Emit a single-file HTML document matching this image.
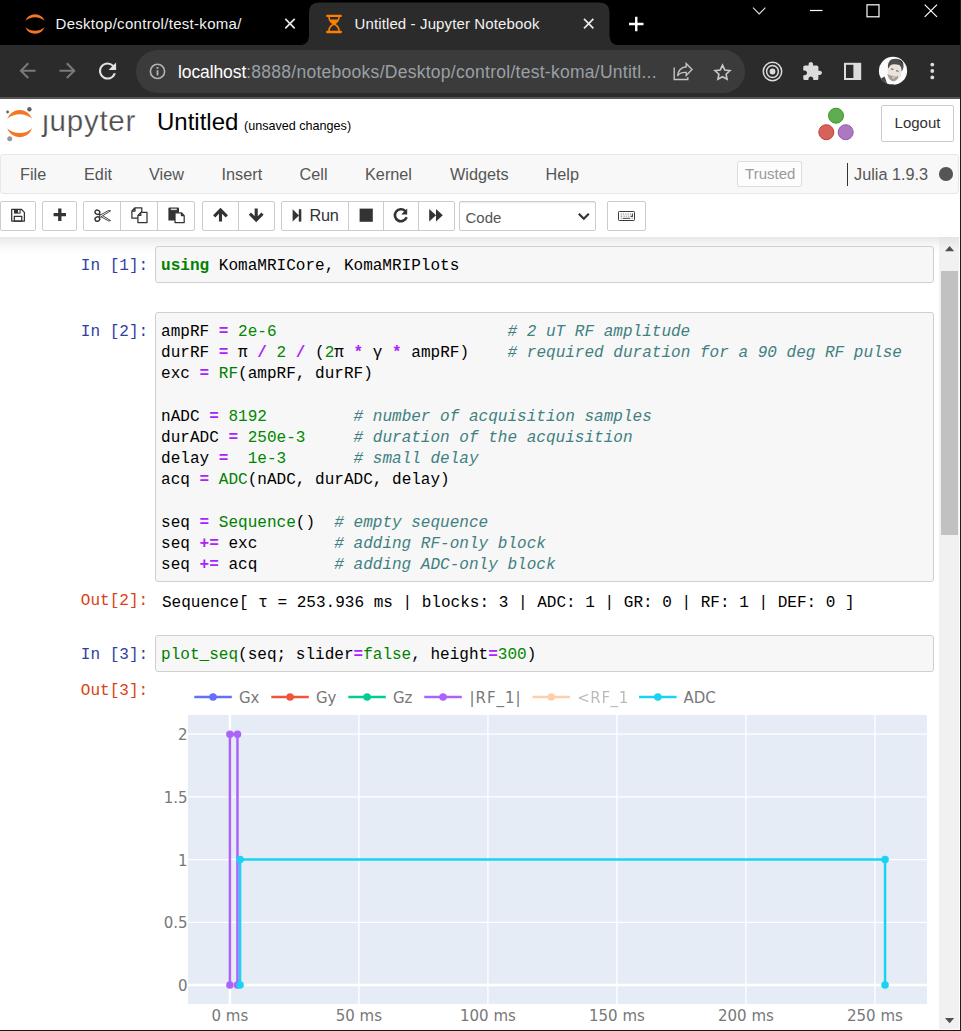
<!DOCTYPE html>
<html lang="en">
<head>
<meta charset="utf-8">
<title>Untitled - Jupyter Notebook</title>
<style>
*{box-sizing:border-box;margin:0;padding:0}
html,body{width:961px;height:1031px;overflow:hidden;background:#fff}
body{position:relative;font-family:"Liberation Sans",Arial,sans-serif;color:#333}
.abs{position:absolute}
svg{position:absolute;overflow:visible}
/* ---------- browser chrome ---------- */
#tabbar{left:0;top:0;width:961px;height:46px;background:#000}
#toolbar{left:0;top:45px;width:961px;height:52px;background:#2b2b2b}
#tbline{left:0;top:97px;width:961px;height:2px;background:#555}
.tabtxt{color:#f1f1f1;font-size:15px;line-height:20px;white-space:nowrap;top:14px}
#pill{left:135.5px;top:50px;width:609.5px;height:43px;border-radius:21.5px;background:#3b3b3b}
#url{left:178px;top:61px;letter-spacing:0.27px;font-size:17.5px;line-height:22px;color:#9aa0a6;white-space:nowrap}
#url b{font-weight:normal;color:#fff;letter-spacing:-0.1px}
/* ---------- jupyter header ---------- */
#jtitle{left:157px;top:107px;font-size:24px;line-height:30px;color:#000;white-space:nowrap}
#junsaved{left:244px;top:117px;font-size:12.6px;line-height:18px;color:#000;white-space:nowrap}
#jlogo{left:42.3px;top:100.5px;font-size:29.5px;line-height:40px;color:#4e4e4e;letter-spacing:0.75px;white-space:nowrap;-webkit-text-stroke:0.25px #fff}
#logout{left:881px;top:105px;width:73px;height:37px;border:1px solid #ccc;border-radius:2px;background:#fff;color:#333;font-size:15px;line-height:34px;text-align:center}
#menubar{left:0;top:154px;width:959px;height:40px;background:#f8f8f8;border:1px solid #e7e7e7;border-radius:3px}
.mi{top:164px;font-size:16.25px;line-height:20px;color:#555;white-space:nowrap}
#trusted{left:737px;top:160.5px;width:65px;height:26px;border:1px solid #ddd;border-radius:2px;background:#fdfdfd;color:#999;font-size:15px;line-height:24.4px;text-align:center;text-indent:1.5px}
#kname{left:854px;top:164px;font-size:16.25px;line-height:20px;color:#555;white-space:nowrap}
#ksep{left:846.8px;top:163px;width:1px;height:23px;background:#333}
#kdot{left:939px;top:167.2px;width:13.6px;height:13.6px;border-radius:50%;background:#555}
.btn{top:201px;height:30px;border:1px solid #ccc;background:#fff;border-radius:2px}
.bdiv{top:202px;width:1px;height:28px;background:#ccc}
#hshadow{left:0;top:237px;width:939px;height:17px;background:linear-gradient(#e8e8e8 0,#efefef 22%,#f6f6f6 45%,#fbfbfb 70%,#fff 100%)}
#sshadow{left:939px;top:237px;width:20px;height:12px;background:linear-gradient(rgba(0,0,0,.055),rgba(0,0,0,0))}
/* ---------- notebook ---------- */
.mono{font-family:"Liberation Mono","DejaVu Sans Mono",monospace;font-size:16.04px;line-height:21.2px;white-space:pre}
.prompt{left:0;width:152px;text-align:right}
.pin{color:#303f9f}
.pout{color:#d84315}
.inbox{left:155px;width:779px;background:#f7f7f7;border:1px solid #cfcfcf;border-radius:3px}
.code{left:161.1px;color:#000}
.k{color:#008000;font-weight:bold}
.o{color:#aa22ff;font-weight:bold}
.n{color:#008800}
.b{color:#008000}
.c{color:#408080;font-style:italic}
/* ---------- scrollbar / frame ---------- */
#sbar{left:939px;top:237px;width:20px;height:792px;background:#f1f1f1}
#sthumb{left:941px;top:271px;width:17px;height:264px;background:#c1c1c1}
#rborder{left:960px;top:0;width:1px;height:1031px;background:#1e1e20}
#bborder{left:0;top:1030px;width:961px;height:1px;background:#22150c}
#bborder2{left:0;top:1029px;width:961px;height:1px;background:#8a8a8a}
/* plot */
.pl{font-family:"DejaVu Sans",Verdana,sans-serif;font-size:15px;fill:#787878}
</style>
</head>
<body>
<!-- ================= BROWSER CHROME ================= -->
<div id="tabbar" class="abs"></div>
<div id="toolbar" class="abs"></div>
<div id="tbline" class="abs"></div>
<svg style="left:0;top:0" width="961" height="100" viewBox="0 0 961 100">
  <!-- active tab -->
  <path d="M298 45.5 Q309 45.5 309 35 L309 12.5 Q309 2.5 319 2.5 L599.5 2.5 Q609.5 2.5 609.5 12.5 L609.5 35 Q609.5 45.5 620.5 45.5 Z" fill="#2b2b2b"/>
  <!-- tab1 favicon (jupyter) -->
  <path d="M25.4 20.7 A10.34 10.34 0 0 1 44.6 20.7 A14.9 14.9 0 0 0 25.4 20.7 Z" fill="#f37726"/>
  <path d="M25.4 27.2 A10.34 10.34 0 0 0 44.6 27.2 A14.9 14.9 0 0 1 25.4 27.2 Z" fill="#f37726"/>
  <!-- tab1 close -->
  <path d="M285.3 18.9 L294.7 28.3 M294.7 18.9 L285.3 28.3" stroke="#e8e8e8" stroke-width="1.7" fill="none"/>
  <!-- tab2 favicon (hourglass) -->
  <g fill="#ff8000" stroke="none">
    <rect x="326.2" y="14.7" width="15.6" height="2.4" rx="0.8"/>
    <rect x="326.2" y="30.8" width="15.6" height="2.4" rx="0.8"/>
    <path d="M329.3 19.6 L338.7 19.6 Q338.2 22 334 24.4 Q329.8 22 329.3 19.6 Z"/>
  </g>
  <path d="M329 17 Q328.8 21.5 334 24 Q339.2 21.5 339 17 M329 31 Q328.8 26.5 334 24 Q339.2 26.5 339 31" stroke="#ff8000" stroke-width="1.5" fill="none"/>
  <!-- tab2 close -->
  <path d="M584 18.9 L593.4 28.3 M593.4 18.9 L584 28.3" stroke="#e8e8e8" stroke-width="1.7" fill="none"/>
  <!-- new tab plus -->
  <path d="M629 24 L643.5 24 M636.25 16.7 L636.25 31.3" stroke="#fff" stroke-width="2.4" fill="none"/>
  <!-- window controls -->
  <path d="M753 7.7 L759.2 13.9 L765.4 7.7" stroke="#e0e0e0" stroke-width="1.1" fill="none"/>
  <path d="M810 10.5 L822.5 10.5" stroke="#fff" stroke-width="1.2" fill="none"/>
  <rect x="867" y="4.8" width="12" height="12" stroke="#fff" stroke-width="1.2" fill="none"/>
  <path d="M924.7 4.6 L937 16.9 M937 4.6 L924.7 16.9" stroke="#fff" stroke-width="1.2" fill="none"/>
</svg>
<div class="abs tabtxt" style="left:55.5px;letter-spacing:0.3px">Desktop/control/test-koma/</div>
<div class="abs tabtxt" style="left:354.5px;letter-spacing:0.12px">Untitled - Jupyter Notebook</div>
<div id="pill" class="abs"></div>
<div id="url" class="abs"><b>localhost</b>:8888/notebooks/Desktop/control/test-koma/Untitl...</div>
<svg style="left:0;top:45px" width="961" height="52" viewBox="0 45 961 52">
  <!-- back / forward -->
  <g transform="translate(15.4,58.5) scale(1.0125)" fill="#7a7a7a"><path d="M20 11H7.83l5.59-5.59L12 4l-8 8 8 8 1.41-1.41L7.83 13H20v-2z"/></g>
  <g transform="translate(79.7,58.5) scale(-1.0125,1.0125)" fill="#7a7a7a"><path d="M20 11H7.83l5.59-5.59L12 4l-8 8 8 8 1.41-1.41L7.83 13H20v-2z"/></g>
  <!-- reload -->
  <g transform="translate(94.7,58.2) scale(1.07)" fill="#e2e2e2"><path d="M17.65 6.35A7.958 7.958 0 0 0 12 4c-4.42 0-7.99 3.58-7.99 8s3.57 8 7.99 8c3.73 0 6.84-2.55 7.73-6h-2.08A5.99 5.99 0 0 1 12 18c-3.31 0-6-2.69-6-6s2.69-6 6-6c1.66 0 3.14.69 4.22 1.78L13 11h7V4l-2.35 2.35z"/></g>
  <!-- info -->
  <circle cx="157.5" cy="71.4" r="7.1" fill="none" stroke="#b4b4b4" stroke-width="1.6"/>
  <rect x="156.6" y="70.2" width="1.8" height="5.2" fill="#b4b4b4"/>
  <rect x="156.6" y="67" width="1.8" height="1.9" fill="#b4b4b4"/>
  <!-- share -->
  <g fill="none" stroke="#c4c4c4" stroke-width="1.4" stroke-linejoin="miter">
    <path d="M674.2 67.4 L674.2 79.5 L687.8 79.5 L687.8 77.2"/>
    <path d="M686.2 63.6 L692 69.6 L686.2 75.6 L686.2 72.4 Q680 72 677.6 76 Q678.4 67.6 686.2 66.8 Z"/>
  </g>
  <!-- star -->
  <path d="M722.5 64.6 L725 69.9 L730.8 70.6 L726.5 74.6 L727.6 80.3 L722.5 77.5 L717.4 80.3 L718.5 74.6 L714.2 70.6 L720 69.9 Z" transform="translate(722.5,72.2) scale(0.9) translate(-722.5,-72.4)" fill="none" stroke="#c8c8c8" stroke-width="1.8" stroke-linejoin="miter"/>
  <!-- target extension -->
  <g fill="none" stroke="#dcdcdc" stroke-width="1.5">
    <circle cx="772.5" cy="71.5" r="9.2"/>
    <circle cx="772.5" cy="71.5" r="5.9"/>
  </g>
  <circle cx="772.5" cy="71.5" r="2.9" fill="#dcdcdc"/>
  <!-- puzzle -->
  <g transform="translate(801.5,61.2) scale(0.89,0.86)" fill="#dcdcdc"><path d="M20.5 11H19V7c0-1.1-.9-2-2-2h-4V3.5C13 2.12 11.88 1 10.500 1S8 2.120 8 3.500V5H4c-1.100 0-1.990.900-1.990 2v3.800H3.500c1.490 0 2.700 1.210 2.700 2.700s-1.210 2.700-2.700 2.700H2V20c0 1.100.900 2 2 2h3.800v-1.500c0-1.490 1.210-2.700 2.700-2.700s2.700 1.210 2.700 2.700V22H17c1.100 0 2-.900 2-2v-4h1.500c1.380 0 2.500-1.120 2.500-2.500S21.880 11 20.500 11z"/></g>
  <!-- side panel -->
  <rect x="845" y="63.8" width="15.2" height="15.2" fill="none" stroke="#dcdcdc" stroke-width="2"/>
  <rect x="853.4" y="63.8" width="6.8" height="15.2" fill="#dcdcdc"/>
  <!-- avatar -->
  <defs><clipPath id="avc"><circle cx="893" cy="70.9" r="14.1"/></clipPath><filter id="avb" x="-10%" y="-10%" width="120%" height="120%"><feGaussianBlur stdDeviation="0.55"/></filter></defs>
  <circle cx="893" cy="70.9" r="14.1" fill="#fbfbfb"/>
  <g clip-path="url(#avc)"><g filter="url(#avb)">
    <path d="M881 78.5 L884.6 76.6 L887.4 84.5 L883 86 Z" fill="#454545"/>
    <path d="M889.4 84.2 L894 84.2 L893.6 86.5 L889.6 86.5 Z" fill="#2a3040"/>
    <ellipse cx="894.4" cy="71.6" rx="6.7" ry="8.8" fill="#e9e2db" transform="rotate(-16 894.4 71.6)"/>
    <path d="M887.9 67.6 Q887.6 62 891.2 59.6 Q896 57.6 900.6 60 Q904.2 62.4 903.4 67.4 Q902.8 70.4 901.6 71.6 Q901.8 67.2 899.6 65.2 Q895.6 63.6 892 64.4 Q889.6 65.2 888.6 68.2 Z" fill="#514b47"/>
    <path d="M898.6 59.4 Q902.2 60.4 903 64 Q901 61.8 898.6 59.4 Z" fill="#1a1817"/>
    <path d="M887.4 73.4 Q887.8 78.4 891.8 81 Q894.6 82 896.4 80 Q898.6 77.6 898.2 75.4 Q895.4 77.8 892.6 75.6 Q890 76.6 887.4 73.4 Z" fill="#91877f" opacity="0.8"/>
    <ellipse cx="893.4" cy="77.6" rx="1.7" ry="1.1" fill="#d9d1c9" opacity="0.9"/>
    <ellipse cx="892.2" cy="69.1" rx="1.5" ry="0.6" fill="#5b544f" transform="rotate(14 892.2 69.1)"/>
    <ellipse cx="897.4" cy="71" rx="1.5" ry="0.6" fill="#5b544f" transform="rotate(14 897.4 71)"/>
  </g></g>
  <!-- menu dots -->
  <circle cx="932.3" cy="64.6" r="1.9" fill="#dcdcdc"/><circle cx="932.3" cy="71" r="1.9" fill="#dcdcdc"/><circle cx="932.3" cy="77.4" r="1.9" fill="#dcdcdc"/>
</svg>

<!-- ================= JUPYTER HEADER ================= -->
<svg style="left:0;top:99px" width="160" height="56" viewBox="0 99 160 56">
  <path d="M7.2 118.8 A13.28 13.28 0 0 1 32.2 118.8 A19.28 19.28 0 0 0 7.2 118.8 Z" fill="#f37726"/>
  <path d="M7.2 128.2 A13.18 13.18 0 0 0 32.2 128.2 A18.39 18.39 0 0 1 7.2 128.2 Z" fill="#f37726"/>
  <circle cx="29.4" cy="109.3" r="2.2" fill="#616262"/>
  <circle cx="7.6" cy="112" r="1.4" fill="#616262"/>
  <circle cx="9.7" cy="138.8" r="2.5" fill="#989798"/>
</svg>
<div id="jlogo" class="abs">&#567;upyter</div>
<div id="jtitle" class="abs">Untitled</div>
<div id="junsaved" class="abs">(unsaved changes)</div>
<svg style="left:810px;top:100px" width="60" height="50" viewBox="810 100 60 50">
  <circle cx="836" cy="115.7" r="7.5" fill="#60ad51" stroke="#389826" stroke-width="1"/>
  <circle cx="826.3" cy="132.2" r="7.5" fill="#d5635c" stroke="#cb3c33" stroke-width="1"/>
  <circle cx="845.7" cy="132.2" r="7.5" fill="#aa79c1" stroke="#9558b2" stroke-width="1"/>
</svg>
<div id="logout" class="abs">Logout</div>
<div id="menubar" class="abs"></div>
<div class="abs mi" style="left:20px">File</div>
<div class="abs mi" style="left:84px">Edit</div>
<div class="abs mi" style="left:149px">View</div>
<div class="abs mi" style="left:221.5px">Insert</div>
<div class="abs mi" style="left:299.5px">Cell</div>
<div class="abs mi" style="left:365px">Kernel</div>
<div class="abs mi" style="left:450px">Widgets</div>
<div class="abs mi" style="left:545.5px">Help</div>
<div id="trusted" class="abs">Trusted</div>
<div id="ksep" class="abs"></div>
<div id="kname" class="abs">Julia 1.9.3</div>
<div id="kdot" class="abs"></div>
<!-- toolbar buttons -->
<div class="abs btn" style="left:0px;width:36px"></div>
<div class="abs btn" style="left:42px;width:35px"></div>
<div class="abs btn" style="left:83px;width:112px"></div>
<div class="abs bdiv" style="left:120px"></div><div class="abs bdiv" style="left:157px"></div>
<div class="abs btn" style="left:202px;width:73px"></div>
<div class="abs bdiv" style="left:238px"></div>
<div class="abs btn" style="left:281px;width:174px"></div>
<div class="abs bdiv" style="left:348px"></div><div class="abs bdiv" style="left:383px"></div><div class="abs bdiv" style="left:418px"></div>
<div class="abs btn" style="left:459px;width:137px;border-color:#ccc;box-shadow:inset 0 1px 1px rgba(0,0,0,.075)"></div>
<div class="abs btn" style="left:607px;width:39px"></div>
<div class="abs" id="runtxt" style="left:309.5px;top:205px;font-size:16.25px;letter-spacing:-0.3px;line-height:20px;color:#333">Run</div>
<div class="abs" id="codetxt" style="left:465.5px;top:207.5px;font-size:15px;line-height:20px;color:#555">Code</div>
<svg style="left:0;top:198px" width="660" height="36" viewBox="0 198 660 36">
  <!-- save (floppy) -->
  <g stroke="#333" stroke-width="1.25" fill="none" stroke-linejoin="round">
    <path d="M11.7 209.3 H21.3 L24.4 212.4 V221.1 H11.7 Z"/>
    <rect x="14.3" y="216.4" width="7.5" height="4.7"/>
  </g>
  <path d="M14 209.3 H20.6 V213.6 H14 Z" fill="#333"/>
  <rect x="18" y="210" width="1.5" height="2.6" fill="#fff"/>
  <!-- plus -->
  <path d="M53.6 214.7 H66 M59.8 208.5 V220.9" stroke="#333" stroke-width="3.3" fill="none"/>
  <!-- scissors -->
  <g stroke="#333" fill="none">
    <ellipse cx="97.4" cy="212.3" rx="2.4" ry="2.1" stroke-width="1.4" transform="rotate(25 97.4 212.3)"/>
    <ellipse cx="97.4" cy="219.1" rx="2.4" ry="2.1" stroke-width="1.4" transform="rotate(-25 97.4 219.1)"/>
    <path d="M99.4 213.6 L110.6 220.6 L108.6 220.9 L99.6 216 Z" stroke-width="0.9" fill="#fff"/>
    <path d="M99.4 217.8 L110.6 210.8 L108.6 210.5 L99.6 215.4 Z" stroke-width="0.9" fill="#fff"/>
  </g>
  <!-- copy -->
  <g stroke="#333" stroke-width="1.25" fill="#fff" stroke-linejoin="round">
    <path d="M135 207.8 H141.8 V218.2 H131.9 V211 Z M135 207.8 V211 H131.9"/>
    <path d="M140.8 212.4 H147 V222.5 H137.9 V215.4 Z M140.8 212.4 V215.4 H137.9"/>
  </g>
  <!-- paste -->
  <path d="M168.4 208.6 Q168.4 207.4 169.6 207.4 H177.8 Q179 207.4 179 208.6 V220.4 H168.4 Z" fill="#333"/>
  <rect x="170.8" y="208.6" width="6" height="1.5" fill="#ddd"/>
  <path d="M175 212.8 H181.4 L184.2 215.6 V222.5 H175 Z M181.4 212.8 V215.6 H184.2" stroke="#333" stroke-width="1.25" fill="#fff" stroke-linejoin="round"/>
  <!-- arrow up / down -->
  <path d="M220.5 221.4 V210.6 M214.2 216.3 L220.5 210 L226.8 216.3" stroke="#333" stroke-width="3.1" fill="none" stroke-linejoin="miter"/>
  <path d="M256.2 208.6 V219.4 M249.9 213.7 L256.2 220 L262.5 213.7" stroke="#333" stroke-width="3.1" fill="none" stroke-linejoin="miter"/>
  <!-- run (step-forward) -->
  <path d="M292.6 209.2 L299 215.4 L292.6 221.6 Z" fill="#333"/>
  <rect x="298.8" y="209.2" width="2.5" height="12.4" fill="#333"/>
  <!-- stop -->
  <rect x="359.6" y="208.6" width="13.2" height="13.2" fill="#333"/>
  <!-- repeat -->
  <path d="M405.3 211.1 A6 6 0 1 0 406.6 217.2" stroke="#333" stroke-width="2.6" fill="none"/>
  <path d="M407.2 208.4 V214.4 H401.2 Z" fill="#333"/>
  <!-- forward -->
  <path d="M429.2 209 L436 215.3 L429.2 221.6 Z M436 209 L442.8 215.3 L436 221.6 Z" fill="#333"/>
  <!-- select chevron -->
  <path d="M578.8 213.8 L583.8 218.8 L588.8 213.8" stroke="#333" stroke-width="2.2" fill="none"/>
  <!-- keyboard -->
  <rect x="618.5" y="211.5" width="16" height="9" rx="0.8" fill="#fff" stroke="#3a3a3a" stroke-width="1"/>
  <g fill="#8a8a8a">
    <rect x="620.6" y="213.5" width="1.2" height="1.1"/><rect x="622.9" y="213.5" width="1.2" height="1.1"/><rect x="625.2" y="213.5" width="1.2" height="1.1"/><rect x="627.5" y="213.5" width="1.2" height="1.1"/><rect x="629.8" y="213.5" width="1.2" height="1.1"/>
    <rect x="620.6" y="215.6" width="1.8" height="1.1"/><rect x="623.6" y="215.6" width="1.2" height="1.1"/><rect x="625.9" y="215.6" width="1.2" height="1.1"/><rect x="628.2" y="215.6" width="1.2" height="1.1"/>
    <rect x="620.6" y="217.8" width="1.2" height="1.1"/><rect x="631.6" y="217.8" width="1.2" height="1.1"/>
  </g>
  <path d="M632.4 213.4 V216.4 H630.6" stroke="#444" stroke-width="1.1" fill="none"/>
  <rect x="622.8" y="217.8" width="7.4" height="1.1" fill="#555"/>
</svg>
<div id="hshadow" class="abs"></div>

<!-- ================= NOTEBOOK ================= -->
<div class="abs inbox" style="top:246px;height:37px"></div>
<div class="abs mono pin" style="left:80.8px;top:255.9px">In [1]:</div>
<div class="abs mono code" style="top:255.9px"><span class="k">using</span> KomaMRICore, KomaMRIPlots</div>
<div class="abs inbox" style="top:312px;height:270px"></div>
<div class="abs mono pin" style="left:80.8px;top:321.9px">In [2]:</div>
<div class="abs mono code" style="top:321.9px">ampRF <span class="o">=</span> <span class="n">2e-6</span>                        <span class="c"># 2 uT RF amplitude</span>
durRF <span class="o">=</span> π <span class="o">/</span> <span class="n">2</span> <span class="o">/</span> (<span class="n">2</span>π <span class="o">*</span> γ <span class="o">*</span> ampRF)    <span class="c"># required duration for a 90 deg RF pulse</span>
exc <span class="o">=</span> <span class="b">RF</span>(ampRF, durRF)

nADC <span class="o">=</span> <span class="n">8192</span>         <span class="c"># number of acquisition samples</span>
durADC <span class="o">=</span> <span class="n">250e-3</span>     <span class="c"># duration of the acquisition</span>
delay <span class="o">=</span>  <span class="n">1e-3</span>       <span class="c"># small delay</span>
acq <span class="o">=</span> <span class="b">ADC</span>(nADC, durADC, delay)

seq <span class="o">=</span> <span class="b">Sequence</span>()  <span class="c"># empty sequence</span>
seq <span class="o">+=</span> exc        <span class="c"># adding RF-only block</span>
seq <span class="o">+=</span> acq        <span class="c"># adding ADC-only block</span></div>
<div class="abs mono pout" style="left:80.8px;top:590.9px">Out[2]:</div>
<div class="abs mono code" style="left:162px;top:592.9px">Sequence[ τ = 253.936 ms | blocks: 3 | ADC: 1 | GR: 0 | RF: 1 | DEF: 0 ]</div>
<div class="abs inbox" style="top:635px;height:37px"></div>
<div class="abs mono pin" style="left:80.8px;top:644.9px">In [3]:</div>
<div class="abs mono code" style="top:644.9px"><span class="b">plot_seq</span>(seq; slider<span class="o">=</span><span class="b">false</span>, height<span class="o">=</span><span class="n">300</span>)</div>
<div class="abs mono pout" style="left:80.8px;top:680.9px">Out[3]:</div>

<!-- ================= PLOT ================= -->
<svg style="left:0;top:680px" width="939" height="350" viewBox="0 680 939 350">
<rect x="188" y="715" width="739" height="289" fill="#e5ecf6"/>
<line x1="358.9" x2="358.9" y1="715" y2="1004" stroke="#fff" stroke-width="1.3"/>
<line x1="487.9" x2="487.9" y1="715" y2="1004" stroke="#fff" stroke-width="1.3"/>
<line x1="616.9" x2="616.9" y1="715" y2="1004" stroke="#fff" stroke-width="1.3"/>
<line x1="745.9" x2="745.9" y1="715" y2="1004" stroke="#fff" stroke-width="1.3"/>
<line x1="874.9" x2="874.9" y1="715" y2="1004" stroke="#fff" stroke-width="1.3"/>
<line x1="188" x2="927" y1="922.3" y2="922.3" stroke="#fff" stroke-width="1.3"/>
<line x1="188" x2="927" y1="859.6" y2="859.6" stroke="#fff" stroke-width="1.3"/>
<line x1="188" x2="927" y1="796.9" y2="796.9" stroke="#fff" stroke-width="1.3"/>
<line x1="188" x2="927" y1="734.2" y2="734.2" stroke="#fff" stroke-width="1.3"/>
<line x1="229.9" x2="229.9" y1="715" y2="1004" stroke="#fff" stroke-width="2.5"/>
<line x1="188" x2="927" y1="985.0" y2="985.0" stroke="#fff" stroke-width="2.5"/>
<polyline fill="none" stroke="#ab63fa" stroke-width="2.5" points="229.9,985.0 229.9,734.2 237.47,734.2 237.47,985.0"/>
<circle cx="229.9" cy="985.0" r="3.75" fill="#ab63fa"/>
<circle cx="229.9" cy="734.2" r="3.75" fill="#ab63fa"/>
<circle cx="237.47" cy="734.2" r="3.75" fill="#ab63fa"/>
<circle cx="237.47" cy="985.0" r="3.75" fill="#ab63fa"/>
<polyline fill="none" stroke="#19d3f3" stroke-width="2.5" points="240.05,985.0 240.05,859.6 885.05,859.6 885.05,985.0"/>
<circle cx="240.05" cy="985.0" r="3.75" fill="#19d3f3"/>
<circle cx="240.05" cy="859.6" r="3.75" fill="#19d3f3"/>
<circle cx="885.05" cy="859.6" r="3.75" fill="#19d3f3"/>
<circle cx="885.05" cy="985.0" r="3.75" fill="#19d3f3"/>
<text class="pl" x="187.6" y="991.0" text-anchor="end">0</text>
<text class="pl" x="187.6" y="928.3" text-anchor="end">0.5</text>
<text class="pl" x="187.6" y="865.6" text-anchor="end">1</text>
<text class="pl" x="187.6" y="802.9" text-anchor="end">1.5</text>
<text class="pl" x="187.6" y="740.2" text-anchor="end">2</text>
<text class="pl" x="229.9" y="1020.5" text-anchor="middle">0 ms</text>
<text class="pl" x="358.9" y="1020.5" text-anchor="middle">50 ms</text>
<text class="pl" x="487.9" y="1020.5" text-anchor="middle">100 ms</text>
<text class="pl" x="616.9" y="1020.5" text-anchor="middle">150 ms</text>
<text class="pl" x="745.9" y="1020.5" text-anchor="middle">200 ms</text>
<text class="pl" x="874.9" y="1020.5" text-anchor="middle">250 ms</text>
<g opacity="1"><line x1="194.3" x2="231.8" y1="697.1" y2="697.1" stroke="#636efa" stroke-width="2.5"/><circle cx="213.05" cy="697.1" r="3.75" fill="#636efa"/><text class="pl" x="239" y="702.6">Gx</text></g>
<g opacity="1"><line x1="271.3" x2="308.8" y1="697.1" y2="697.1" stroke="#ef553b" stroke-width="2.5"/><circle cx="290.05" cy="697.1" r="3.75" fill="#ef553b"/><text class="pl" x="316" y="702.6">Gy</text></g>
<g opacity="1"><line x1="348.3" x2="385.8" y1="697.1" y2="697.1" stroke="#00cc96" stroke-width="2.5"/><circle cx="367.05" cy="697.1" r="3.75" fill="#00cc96"/><text class="pl" x="393" y="702.6">Gz</text></g>
<g opacity="1"><line x1="424.3" x2="461.8" y1="697.1" y2="697.1" stroke="#ab63fa" stroke-width="2.5"/><circle cx="443.05" cy="697.1" r="3.75" fill="#ab63fa"/><text class="pl" x="469.6" y="702.6" letter-spacing="0.95">|RF_1|</text></g>
<g opacity="0.5"><line x1="532.5" x2="570.0" y1="697.1" y2="697.1" stroke="#ffa15a" stroke-width="2.5"/><circle cx="551.25" cy="697.1" r="3.75" fill="#ffa15a"/><text class="pl" x="577.2" y="702.6" letter-spacing="0.6">&lt;RF_1</text></g>
<g opacity="1"><line x1="639.1" x2="676.6" y1="697.1" y2="697.1" stroke="#19d3f3" stroke-width="2.5"/><circle cx="657.85" cy="697.1" r="3.75" fill="#19d3f3"/><text class="pl" x="683.4" y="702.6">ADC</text></g>
</svg>

<!-- ================= SCROLLBAR / FRAME ================= -->
<div id="sbar" class="abs"></div>
<div id="sthumb" class="abs"></div>
<div id="sshadow" class="abs"></div>
<svg style="left:939px;top:237px" width="20" height="792" viewBox="0 0 20 792">
  <path d="M6 14.3 L10.6 9 L15.2 14.3 Z" fill="#505050"/>
  <path d="M6 780.9 L15.2 780.9 L10.6 786.2 Z" fill="#505050"/>
</svg>
<div id="rborder" class="abs"></div>
<div id="bborder" class="abs"></div>
</body>
</html>
